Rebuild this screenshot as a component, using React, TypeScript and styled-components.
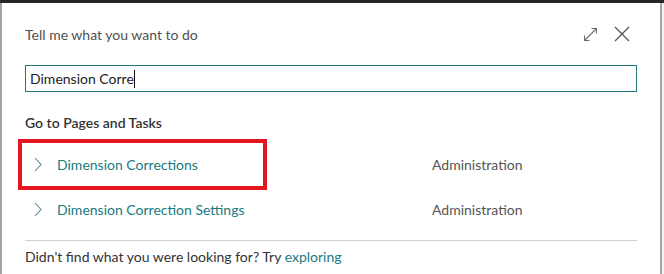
import styled, { createGlobalStyle } from "styled-components";

const GlobalStyle = createGlobalStyle`
  html, body {
    margin: 0;
    padding: 0;
    background: #f3f3f3;
  }
  body {
    font-family: "Segoe UI", Lato, "Noto Sans", sans-serif;
  }
`;

const Screen = styled.div`
  width: 664px;
  height: 274px;
  overflow: hidden;
  border-top: 3px solid #262626;
  box-sizing: border-box;
  display: flex;
`;

const Dialog = styled.div`
  width: 662px;
  flex-shrink: 0;
  box-sizing: border-box;
  background: #fff;
  border-left: 2px solid #a3a3a3;
  border-right: 2px solid #a3a3a3;
  padding: 20px 23px 0 23px;
  display: flex;
  flex-direction: column;
`;

const Header = styled.div`
  display: flex;
  align-items: center;
  justify-content: space-between;
  height: 22px;
`;

const Title = styled.div`
  font-size: 14px;
  color: #505050;
`;

const HeaderActions = styled.div`
  display: flex;
  align-items: center;
  gap: 16px;
  margin-right: 7px;
`;

const IconButton = styled.span<{ $tone: string }>`
  display: flex;
  color: ${(p) => p.$tone};
`;

const SearchBox = styled.div`
  margin-top: 20px;
  height: 27px;
  border: 1px solid #24757a;
  box-sizing: border-box;
  display: flex;
  align-items: center;
  padding-left: 4px;
  font-size: 14px;
  color: #222;
`;

const Caret = styled.span`
  display: inline-block;
  width: 1px;
  height: 18px;
  background: #111;
  vertical-align: middle;
`;

const SectionTitle = styled.div`
  margin-top: 22px;
  font-size: 14px;
  font-weight: 600;
  color: #333;
`;

const Results = styled.div`
  margin-top: 11px;
  display: flex;
  flex-direction: column;
`;

const Row = styled.div`
  position: relative;
  height: 45px;
  display: flex;
  align-items: center;
  font-size: 14px;
`;

const Highlight = styled.div`
  position: absolute;
  left: -7px;
  top: -3px;
  width: 249px;
  height: 51px;
  border: 4px solid #e3161f;
  box-sizing: border-box;
  pointer-events: none;
`;

const Chevron = styled.span`
  display: flex;
  width: 32px;
  padding-left: 9px;
  box-sizing: border-box;
  color: #4d8e93;
`;

const PageLink = styled.span`
  width: 375px;
  color: #1a7a80;
`;

const Category = styled.span`
  color: #555;
`;

const Divider = styled.div`
  margin-top: 8px;
  height: 1px;
  background: #d0d0d0;
`;

const Footer = styled.div`
  margin-top: 7px;
  font-size: 14px;
  color: #333;
`;

const Explore = styled.span`
  color: #1a7a80;
`;

const results = [
  { name: "Dimension Corrections", category: "Administration", marked: true },
  { name: "Dimension Correction Settings", category: "Administration", marked: false },
];

const App = () => {
  return (
    <>
      <GlobalStyle />
      <Screen>
        <Dialog>
          <Header>
            <Title>Tell me what you want to do</Title>
            <HeaderActions>
              <IconButton $tone="#6a6a6a">
                <svg width="15" height="15" viewBox="0 0 15 15" fill="none" stroke="currentColor" strokeWidth="1.1">
                  <path d="M1.5 13.5 L13.5 1.5 M8.5 1.5 H13.5 V6.5 M1.5 8.5 V13.5 H6.5" />
                </svg>
              </IconButton>
              <IconButton $tone="#555">
                <svg width="16" height="16" viewBox="0 0 16 16" fill="none" stroke="currentColor" strokeWidth="1.3">
                  <path d="M1 1 L15 15 M15 1 L1 15" />
                </svg>
              </IconButton>
            </HeaderActions>
          </Header>
          <SearchBox>
            Dimension Corre
            <Caret />
          </SearchBox>
          <SectionTitle>Go to Pages and Tasks</SectionTitle>
          <Results>
            {results.map((r) => (
              <Row key={r.name}>
                {r.marked && <Highlight />}
                <Chevron>
                  <svg width="8" height="15" viewBox="0 0 8 15" fill="none" stroke="currentColor" strokeWidth="1.1">
                    <path d="M1 1 L7 7.5 L1 14" />
                  </svg>
                </Chevron>
                <PageLink>{r.name}</PageLink>
                <Category>{r.category}</Category>
              </Row>
            ))}
          </Results>
          <Divider />
          <Footer>
            Didn't find what you were looking for? Try <Explore>exploring</Explore>
          </Footer>
        </Dialog>
      </Screen>
    </>
  );
};

export default App;
